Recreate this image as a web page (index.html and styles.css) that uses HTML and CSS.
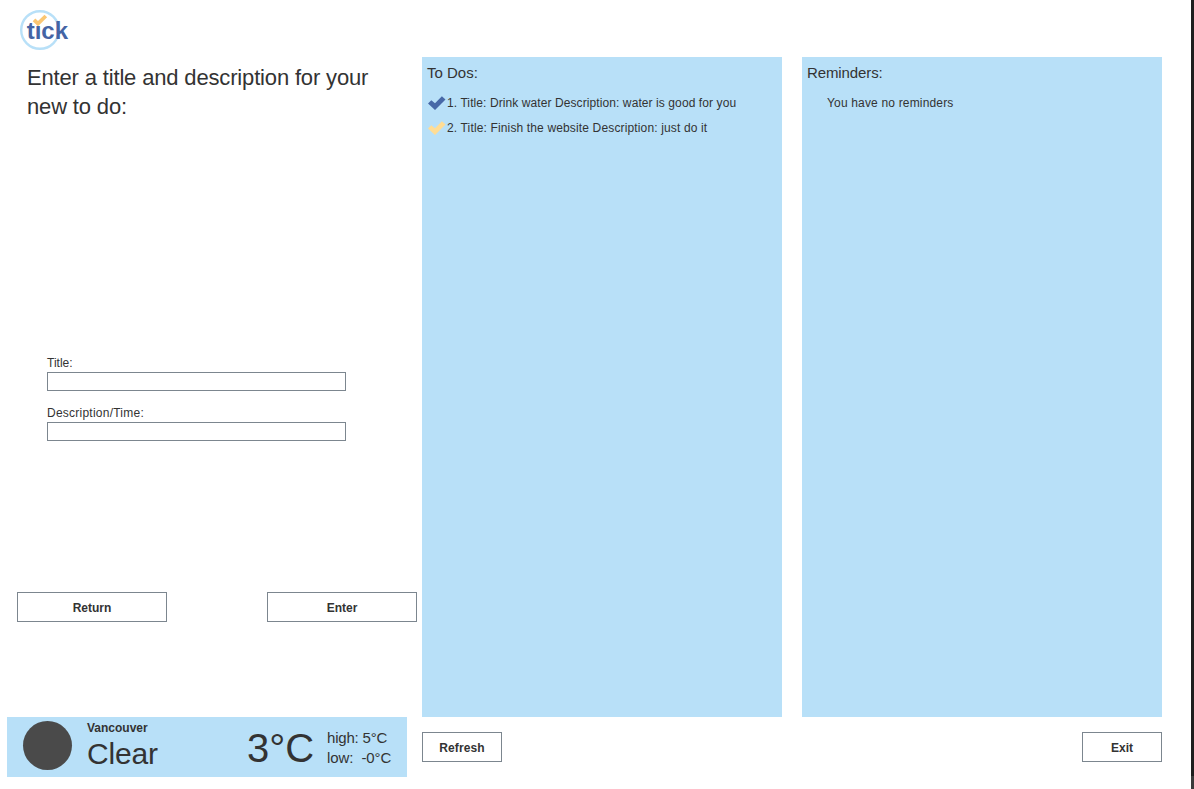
FILE: index.html
```html
<!DOCTYPE html>
<html lang="en">
<head>
<meta charset="utf-8">
<title>tick</title>
<link rel="stylesheet" href="styles.css">
</head>
<body>
<div class="window">
  <header class="header">
    <svg class="logo" width="60" height="46" viewBox="0 0 60 46" role="img" aria-label="tick">
      <circle class="logo-ring" cx="25" cy="24" r="18.8"/>
      <text class="logo-text" x="11.7" y="32.7" textLength="41.3" lengthAdjust="spacingAndGlyphs">tıck</text>
      <path class="logo-tick" d="M19 13.8 L23 17.6 L30.8 10"/>
    </svg>
  </header>
  <main class="content">
    <section class="left">
      <h1 class="prompt">Enter a title and description for your<br>new to do:</h1>
      <form class="fields">
        <label class="field"><span class="label">Title:</span><input class="input" type="text"></label>
        <label class="field"><span class="label label-desc">Description/Time:</span><input class="input" type="text"></label>
      </form>
      <div class="actions">
        <button class="button wide">Return</button>
        <button class="button wide">Enter</button>
      </div>
    </section>
    <section class="panel">
      <h2 class="panel-title">To Dos:</h2>
      <ul class="list">
        <li class="item"><svg class="check blue" width="20" height="17" viewBox="0 0 20 17"><path d="M1 9.4 L4.3 6.2 L8 9.3 L14.9 2.2 L18.5 5.4 L8 16 Z"/></svg><span class="first">1. Title: Drink water Description: water is good for you</span></li>
        <li class="item"><svg class="check yellow" width="20" height="17" viewBox="0 0 20 17"><path d="M1 9.4 L4.3 6.2 L8 9.3 L14.9 2.2 L18.5 5.4 L8 16 Z"/></svg><span class="second">2. Title: Finish the website Description: just do it</span></li>
      </ul>
    </section>
    <section class="panel">
      <h2 class="panel-title reminders">Reminders:</h2>
      <p class="empty">You have no reminders</p>
    </section>
  </main>
  <footer class="footer">
    <section class="weather">
      <div class="moon"></div>
      <div class="place">
        <div class="city">Vancouver</div>
        <div class="sky">Clear</div>
      </div>
      <div class="temp">3°C</div>
      <div class="range">
        <div class="high">high: 5°C</div>
        <div class="low">low:&nbsp; -0°C</div>
      </div>
    </section>
    <button class="button refresh">Refresh</button>
    <button class="button exit">Exit</button>
  </footer>
</div>
</body>
</html>
```
FILE: styles.css
```css
* { box-sizing: border-box; }
body {
  margin: 0;
  background: #fff;
  color: #333;
  font: 12px/16px "Liberation Sans", Arial, sans-serif;
}
h1, h2, p, ul { margin: 0; padding: 0; font-weight: normal; list-style: none; }
.window {
  height: 789px;
  padding-right: 3px;
  background: linear-gradient(#1e1e1e 776px, #3a3a3a 776px) right / 3px 100% no-repeat;
  overflow: hidden;
  white-space: nowrap;
}

/* Header */
.header { height: 57px; padding: 6px 0 0 15px; }
.logo { display: block; }
.logo-ring { fill: none; stroke: #b8e0f8; stroke-width: 2.4; }
.logo-text { fill: #4464a4; font: bold 24px "Liberation Sans", Arial, sans-serif; }
.logo-tick { fill: none; stroke: #fbc773; stroke-width: 3.8; }

/* Main columns */
.content {
  display: grid;
  grid-template-columns: 405px 360px 380px;
  height: 660px;
  padding-left: 17px;
}
.left { display: flex; flex-direction: column; padding-right: 5px; }
.prompt {
  height: 298px;
  padding: 6px 0 0 10px;
  font-size: 22px;
  line-height: 29px;
  letter-spacing: -0.16px;
}
.fields { display: flex; flex-direction: column; gap: 14px; height: 237px; padding-left: 30px; }
.field { display: flex; flex-direction: column; align-items: flex-start; gap: 1px; }
.label { line-height: 16px; }
.label-desc { letter-spacing: 0.24px; }
.input {
  width: 299px;
  height: 19px;
  margin: 0;
  padding: 0 3px;
  border: 1px solid #7c868f;
  border-radius: 0;
  background: #fff;
  font: inherit;
}
.actions { display: flex; justify-content: space-between; }
.button {
  width: 80px;
  height: 30px;
  padding: 1px 0 0;
  border: 1px solid #7c868f;
  border-radius: 0;
  background: #fff;
  color: #333;
  font: bold 12px/16px "Liberation Sans", Arial, sans-serif;
}
.wide { width: 150px; }

/* Lists */
.panel { padding: 7px 5px; background: #b8e0f8; }
.panel + .panel { margin-left: 20px; }
.panel-title { font-size: 15px; line-height: 17px; }
.reminders { letter-spacing: -0.1px; }
.list { margin-top: 9px; }
.item { display: flex; align-items: center; height: 25px; }
.check { flex: none; }
.blue { fill: #4768a7; }
.yellow { fill: #ffdd95; }
.first { letter-spacing: 0.09px; }
.second { letter-spacing: 0.145px; }
.empty { margin-top: 10px; padding-left: 20px; line-height: 25px; letter-spacing: 0.17px; }

/* Footer */
.footer { display: flex; padding-left: 7px; }
.weather {
  display: flex;
  width: 400px;
  height: 60px;
  padding-left: 16px;
  background: #b8e0f8;
}
.moon { width: 49px; height: 49px; margin-top: 4px; border-radius: 50%; background: #4a4a4a; }
.place { width: 160px; padding: 3px 0 0 15px; }
.city { font-weight: bold; line-height: 16px; }
.sky { font-size: 30px; line-height: 36px; letter-spacing: -0.15px; }
.temp { width: 95px; padding-left: 15px; font-size: 40px; line-height: 62px; }
.range { padding-top: 11px; font-size: 15px; line-height: 20px; }
.high { letter-spacing: -0.2px; }
.low { letter-spacing: -0.1px; }
.refresh { margin: 15px 0 0 15px; letter-spacing: 0.1px; }
.exit { margin: 15px 29px 0 auto; }
```
